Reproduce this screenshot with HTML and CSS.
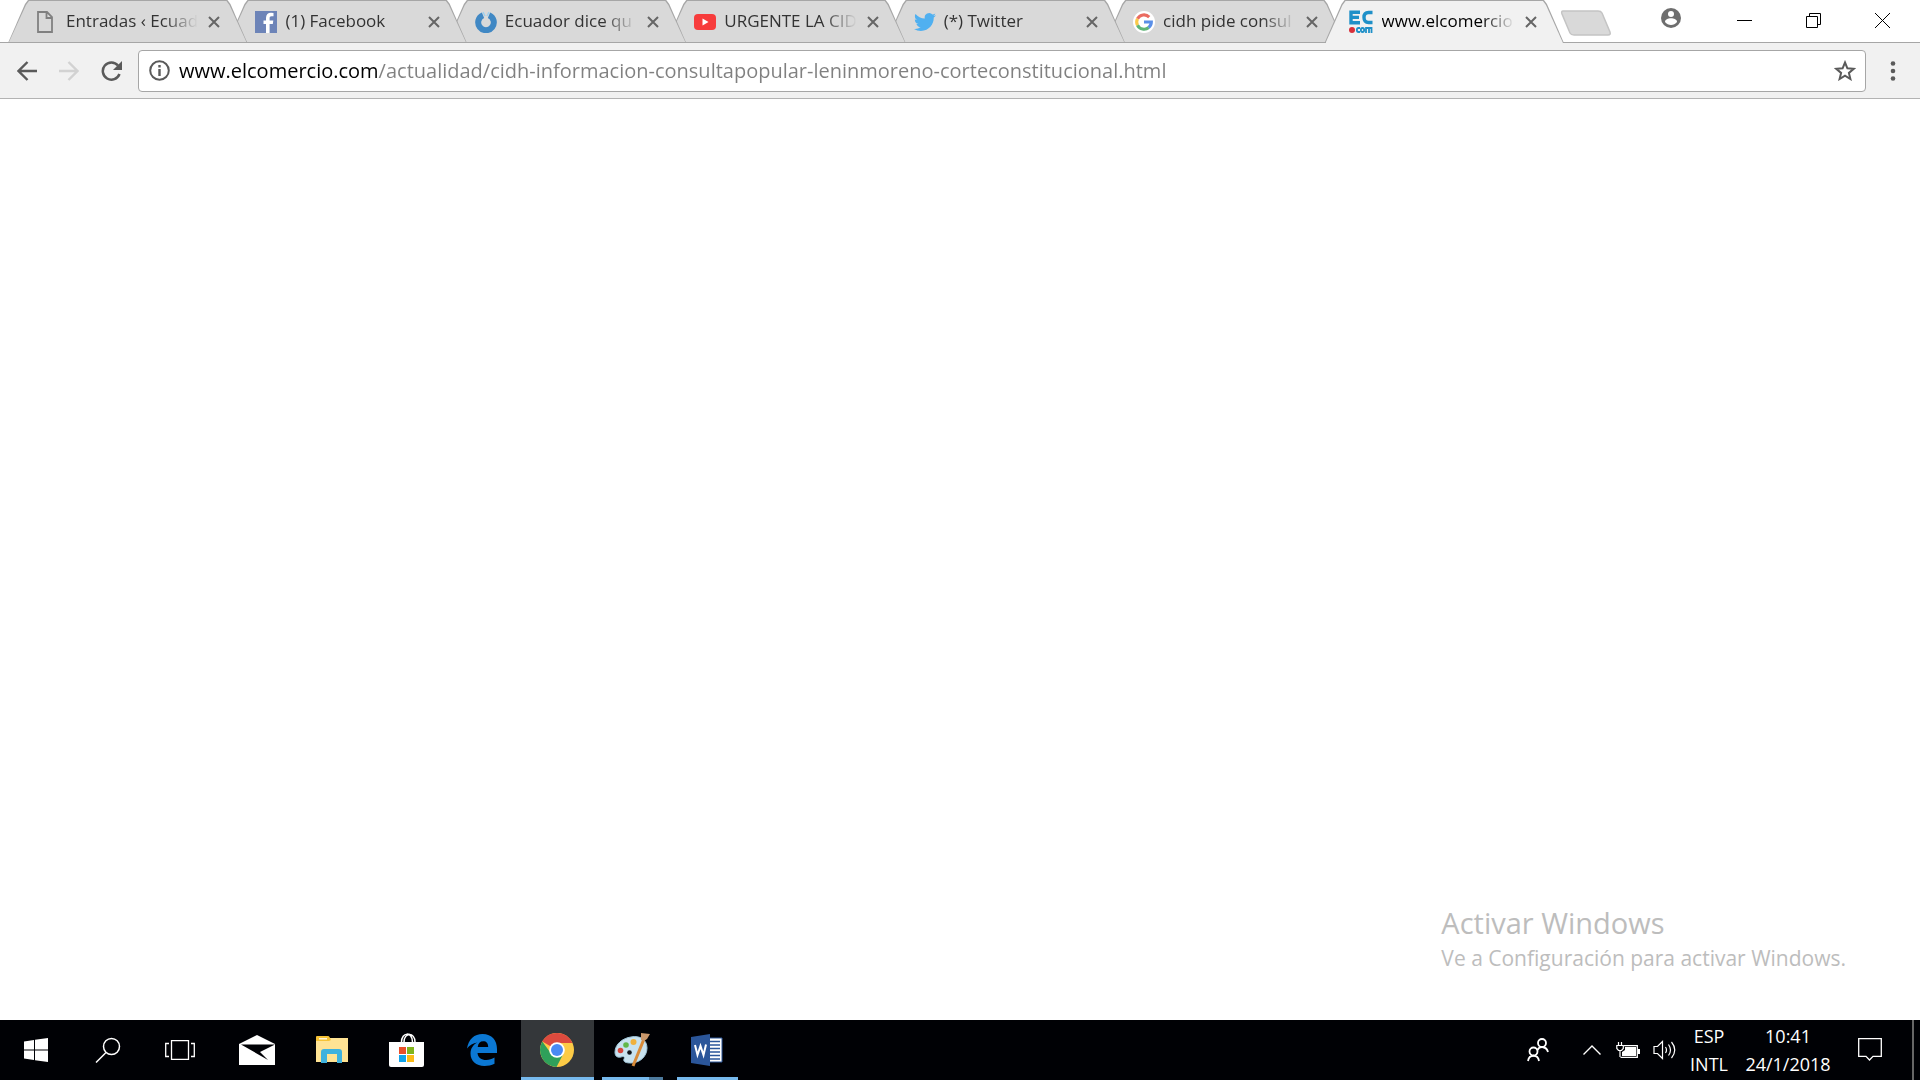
FILE: index.html
```
<!DOCTYPE html>
<html lang="es">
<head>
<meta charset="utf-8">
<title>www.elcomercio.com</title>
<link rel="stylesheet" href="styles.css">
</head>
<body>
<header class="titlebar">
  <ul class="tabs">
    <li class="tab">
      <svg class="favicon" viewBox="0 0 22 22"><path d="M2 1h9l5 5v15H2zM10.500 1v6H16" fill="none" stroke="#808080" stroke-width="1.800"/></svg>
      <a class="tab-title" href="#">Entradas ‹ Ecuad</a>
      <button class="tab-close" aria-label="Cerrar"><svg viewBox="0 0 12 12"><path d="M1 1l10 10M11 1L1 11"/></svg></button>
    </li>
    <li class="tab">
      <svg class="favicon" viewBox="0 0 22 22"><path fill="#6d84b8" d="M0 0h22v22H0z"/><path fill="#fff" d="M11 22v-9H8.500V9.500H11V7c0-3.500 2-5.200 5-5.200l2.500.1v3.300h-2c-1.500 0-1.900.8-1.900 1.900v2.400h3.700l-.5 3.500h-3.200v9z"/></svg>
      <a class="tab-title" href="#">(1) Facebook</a>
      <button class="tab-close" aria-label="Cerrar"><svg viewBox="0 0 12 12"><path d="M1 1l10 10M11 1L1 11"/></svg></button>
    </li>
    <li class="tab">
      <svg class="favicon" viewBox="0 0 22 22"><path d="M8 4.200A7.800 7.800 0 1 0 14 4.200" fill="none" stroke="#4088c4" stroke-width="6"/><path d="M8 1l2 4M14 1l-2 4" stroke="#9fd0ee" stroke-width="1.500"/></svg>
      <a class="tab-title" href="#">Ecuador dice qu</a>
      <button class="tab-close" aria-label="Cerrar"><svg viewBox="0 0 12 12"><path d="M1 1l10 10M11 1L1 11"/></svg></button>
    </li>
    <li class="tab">
      <svg class="favicon" viewBox="0 0 22 22"><rect y="3" width="22" height="16" rx="4" fill="#f73c3c"/><path fill="#fff" d="M8.500 7.500v7l6-3.500z"/></svg>
      <a class="tab-title" href="#">URGENTE LA CID</a>
      <button class="tab-close" aria-label="Cerrar"><svg viewBox="0 0 12 12"><path d="M1 1l10 10M11 1L1 11"/></svg></button>
    </li>
    <li class="tab">
      <svg class="favicon" viewBox="0 0 24 24"><path fill="#50b0f0" d="M23.950 4.570a10 10 0 0 1-2.820.77 4.960 4.960 0 0 0 2.160-2.720 9.900 9.900 0 0 1-3.120 1.190 4.920 4.920 0 0 0-8.380 4.480C7.690 8.100 4.070 6.130 1.640 3.160a4.820 4.820 0 0 0-.67 2.480c0 1.710.87 3.210 2.190 4.100a4.900 4.900 0 0 1-2.230-.62v.06a4.920 4.920 0 0 0 3.950 4.830 5 5 0 0 1-2.210.08 4.940 4.940 0 0 0 4.600 3.420A9.870 9.870 0 0 1 0 19.540a13.940 13.940 0 0 0 7.550 2.210c9.050 0 14-7.500 14-13.980 0-.21 0-.42-.02-.63a9.940 9.940 0 0 0 2.460-2.550z"/></svg>
      <a class="tab-title" href="#">(*) Twitter</a>
      <button class="tab-close" aria-label="Cerrar"><svg viewBox="0 0 12 12"><path d="M1 1l10 10M11 1L1 11"/></svg></button>
    </li>
    <li class="tab">
      <svg class="favicon" viewBox="0 0 24 24"><circle cx="12" cy="12" r="12" fill="#fff"/><g fill="none" stroke-width="3.400"><path stroke="#ea6b60" d="M17.700 6.600A8 8 0 0 0 4.900 8.500"/><path stroke="#fbc94a" d="M4.900 8.400a8 8 0 0 0 0 7.200"/><path stroke="#5fb577" d="M4.900 15.500a8 8 0 0 0 12.300 2.500"/><path stroke="#5a8fe8" d="M17.100 18.100A8 8 0 0 0 20 12h-8"/></g></svg>
      <a class="tab-title" href="#">cidh pide consul</a>
      <button class="tab-close" aria-label="Cerrar"><svg viewBox="0 0 12 12"><path d="M1 1l10 10M11 1L1 11"/></svg></button>
    </li>
    <li class="tab active">
      <svg class="favicon" viewBox="0 0 24 24"><path fill="none" stroke="#1f90c8" stroke-width="3.400" d="M11 2.200H2v10.600h9M2 7.400h8M23.500 2.500h-4c-3 0-4.500 2-4.500 5s1.500 5 4.500 5h4"/><circle cx="3" cy="20" r="3" fill="#d8303a"/><path fill="none" stroke="#1f90c8" stroke-width="1.800" d="M11 18H9.500C7.300 18 7.300 22 9.500 22H11M13.500 18c-2.200 0-2.200 4 0 4s2.200-4 0-4M17 23v-5h5.500v5M20 18v5"/></svg>
      <a class="tab-title" href="#">www.elcomercio</a>
      <button class="tab-close" aria-label="Cerrar"><svg viewBox="0 0 12 12"><path d="M1 1l10 10M11 1L1 11"/></svg></button>
    </li>
  </ul>
  <div class="window-area">
    <button class="new-tab" aria-label="Nueva pestaña"><svg width="52" height="26" viewBox="0 0 52 26"><path d="M3 1h35q3 0 4 2l8 19q1 3-2 3H14q-3 0-4-2L2 4q-1-3 1-3z" fill="#d9d9d9" stroke="#c4c4c4" stroke-width="1.500"/></svg></button>
    <div class="window-controls">
      <button class="profile" aria-label="Usuario"><svg width="20" height="20" viewBox="0 0 20 20"><circle cx="10" cy="10" r="10" fill="#6e6e6e"/><circle cx="10" cy="6" r="3" fill="#fff"/><path fill="#fff" d="M4 14c0-5 12-5 12 0-3 4-9 4-12 0z"/></svg></button>
      <button aria-label="Minimizar"><svg width="15" height="15" viewBox="0 0 15 15"><path d="M0 7.500h15"/></svg></button>
      <button aria-label="Restaurar"><svg width="15" height="15" viewBox="0 0 15 15"><path d="M.5 3.500h11v11H.5zM3.500 3.500v-3h11v11h-3"/></svg></button>
      <button aria-label="Cerrar ventana"><svg width="15" height="15" viewBox="0 0 15 15"><path d="M0 0l15 15M15 0L0 15"/></svg></button>
    </div>
  </div>
</header>
<nav class="toolbar">
  <button class="tool" aria-label="Atrás"><svg width="20" height="20" viewBox="0 0 20 20"><path d="M20 10H2M10.500 1L1.500 10l9 9" fill="none" stroke="#5a5a5a" stroke-width="2.400"/></svg></button>
  <button class="tool" aria-label="Adelante" disabled><svg width="20" height="20" viewBox="0 0 20 20"><path d="M0 10h18M9.500 1l9 9-9 9" fill="none" stroke="#d2d2d2" stroke-width="2.400"/></svg></button>
  <button class="tool" aria-label="Recargar"><svg width="21" height="20" viewBox="0 0 21 20"><path d="M17 4.500A8.600 8.600 0 1 0 18.500 13" fill="none" stroke="#5a5a5a" stroke-width="2.500"/><path fill="#5a5a5a" d="M21 0v9h-9z"/></svg></button>
  <div class="omnibox">
    <svg width="21" height="21" viewBox="0 0 21 21"><circle cx="10.500" cy="10.500" r="9.300" fill="none" stroke="#5a5a5a" stroke-width="2"/><path d="M10.500 9v7M10.500 5v2.500" stroke="#5a5a5a" stroke-width="2.400"/></svg>
    <input class="url" type="text" aria-label="Dirección" spellcheck="false" value="www.elcomercio.com/actualidad/cidh-informacion-consultapopular-leninmoreno-corteconstitucional.html">
    <button class="star" aria-label="Añadir a marcadores"><svg width="22" height="21" viewBox="0 0 22 21"><path d="M11 2.500l2.400 5.800 6.300.5-4.800 4.100 1.500 6.100L11 15.700 5.600 19l1.500-6.100-4.800-4.100 6.300-.5z" fill="none" stroke="#5a5a5a" stroke-width="2"/></svg></button>
  </div>
  <button class="menu" aria-label="Menú"><svg width="6" height="20" viewBox="0 0 6 20" fill="#5a5a5a"><circle cx="3" cy="2.500" r="2.300"/><circle cx="3" cy="10" r="2.300"/><circle cx="3" cy="17.500" r="2.300"/></svg></button>
</nav>
<main class="page">
  <aside class="watermark">
    <p class="watermark-title">Activar Windows</p>
    <p class="watermark-text">Ve a Configuración para activar Windows.</p>
  </aside>
</main>
<footer class="taskbar">
  <div class="system">
    <button aria-label="Inicio"><svg width="24" height="24" viewBox="0 0 24 24" fill="#fff"><path d="M0 3.400l10-1.400v9.500H0zM11 1.800L24 0v11.500H11zM0 12.500h10V22L0 20.600zM11 12.500h13V24l-13-1.800z"/></svg></button>
    <button aria-label="Buscar"><svg width="26" height="26" viewBox="0 0 26 26" fill="none" stroke="#fff" stroke-width="1.500"><circle cx="16.500" cy="9.500" r="8"/><path d="M11 15.500L1 25.500"/></svg></button>
    <button aria-label="Vista de tareas"><svg width="30" height="20" viewBox="0 0 30 20" fill="none" stroke="#fff"><path stroke-width="1.300" d="M6.500.7h17v18.600h-17zM4 3.500H.7v13H4M26 3.500h3.300v13H26"/></svg></button>
  </div>
  <div class="apps">
    <button aria-label="Correo"><svg width="36" height="30" viewBox="0 0 36 30"><path fill="#fff" d="M0 9L18 0l18 9v21H0z"/><path fill="#000105" d="M2 9.500h34L21 17l8 8z"/></svg></button>
    <button aria-label="Explorador de archivos"><svg width="32" height="28" viewBox="0 0 32 28"><path fill="#ffe394" d="M0 2h32v24H0z"/><path fill="#f6c336" d="M0 1q0-1 1-1h11q1 0 1.500 1L15 4l-2 1H0z"/><path fill="#fff6d8" d="M3 2h8v1.500H3z"/><path fill="#3fb2de" d="M5 27V16q0-3 3-3h15q3 0 3 3v11h-5v-9H11v9z"/></svg></button>
    <button aria-label="Tienda"><svg width="36" height="34" viewBox="0 0 36 34"><path d="M12.500 9c0-10 11-11 11 0M15 9c0-10 11-10 11 0" fill="none" stroke="#fff" stroke-width="1.500"/><path fill="#fff" d="M0 9h35v23q0 2-2 2H2q-2 0-2-2z"/><path fill="#e9502b" d="M10 14h7v7h-7z"/><path fill="#80b41c" d="M18 14h7v7h-7z"/><path fill="#12a4ea" d="M10 22h7v7h-7z"/><path fill="#fbba16" d="M18 22h7v7h-7z"/></svg></button>
    <button aria-label="Edge"><svg width="30" height="32" viewBox="0 0 30 32"><path fill="#0b78d4" d="M0 14.500C1.500 5 7.500 0 15.500 0 25 0 30 6.500 30 15v4H10.500c.3 4.500 4 7 8.700 7 3 0 5.800-.9 8.300-2.500v6.300C24.500 31.300 21 32 17.500 32 9 32 3.500 27 3.500 19.500c0-5 2.800-9 7-11-4.500.5-8 2.500-10.500 6zM10.700 13h10.500c0-3.700-1.800-5.700-5-5.700-3.100 0-5 2-5.500 5.700z"/></svg></button>
    <button class="running current" aria-label="Chrome"><svg width="34" height="34" viewBox="0 0 34 34"><circle cx="17" cy="17" r="17" fill="#fccb46"/><path fill="#dc4a3e" d="M17 17L2.300 8.500A17 17 0 0 1 32.500 10H17z"/><path fill="#2fa05a" d="M2.300 8.500A17 17 0 0 0 16.500 34l7-13.500L17 17l-6 3.500z"/><circle cx="17" cy="17" r="7.800" fill="#fff"/><circle cx="17" cy="17" r="6" fill="#4a8af4"/></svg></button>
    <button class="running grouped" aria-label="Paint"><svg width="36" height="36" viewBox="0 0 36 36"><path fill="#c8e2ef" stroke="#9fc5d9" d="M17 5C26 3 33 8 33 16c0 9-8 15-16 15-5 0-8-1-7-4 1-2 0-3-3-2-5 1-6-2-6-5C1 12 9 6 17 5z"/><circle cx="15.500" cy="20.500" r="2.300" fill="#10151c"/><circle cx="6.500" cy="18.500" r="2.800" fill="#d8473c"/><circle cx="12" cy="13" r="2.800" fill="#61b84a"/><circle cx="19.500" cy="10" r="3" fill="#f0b13c"/><path d="M30 7L19 34" stroke="#d88b3a" stroke-width="3"/><path fill="#c9976b" d="M27 1l9 1-3 5-3 2-3-1z"/></svg></button>
    <button class="running" aria-label="Word"><svg width="32" height="32" viewBox="0 0 32 32"><path fill="#fff" stroke="#2b569a" d="M16 4h15v24H16z"/><path d="M19 7.500h10M19 11h10M19 14.500h10M19 18h10M19 21.500h10M19 25h10" stroke="#2b569a" stroke-width="1.500"/><path fill="#2b569a" d="M0 3l19-3v32L0 29z"/><path d="M4 11l2.500 10L9.500 12l3 9L15 10.500" fill="none" stroke="#fff" stroke-width="2"/></svg></button>
  </div>
  <div class="tray">
    <button class="people" aria-label="Contactos"><svg width="22" height="24" viewBox="0 0 22 24" fill="none" stroke="#fff" stroke-width="1.800"><circle cx="15" cy="5" r="4"/><path d="M10.500 12c2-4 9-4 10.500 2"/><circle cx="6.500" cy="13.500" r="4"/><path d="M1 23c1-7 10-7 11 0"/></svg></button>
    <button aria-label="Mostrar iconos ocultos"><svg width="18" height="10" viewBox="0 0 18 10"><path d="M.5 9.500L9 1l8.500 8.500" fill="none" stroke="#fff" stroke-width="1.400"/></svg></button>
    <button aria-label="Batería"><svg width="24" height="16" viewBox="0 0 24 16"><path d="M8 3.700h13.300v11.600H4.500" fill="none" stroke="#fff" stroke-width="1.300"/><path fill="#fff" d="M9 5h11v9H6v-4l3-2zM22 7h2v5h-2z"/><path d="M2.500 0v3M5.500 0v3M.8 3.500h6.500v3L5.500 8.500h-3L.8 6.500zM4 8.500V15" fill="none" stroke="#fff" stroke-width="1.200"/></svg></button>
    <button aria-label="Volumen"><svg width="23" height="20" viewBox="0 0 23 20" fill="none" stroke="#fff" stroke-width="1.200"><path d="M1 6.500h3.500L9.500 1.500v17l-5-5H1zM12.500 7q2 3 0 6M15.500 4.500q4 5.500 0 11M18.500 2q6.500 8 0 16"/></svg></button>
    <button class="language">ESP<br>INTL</button>
    <button class="clock">10:41<br>24/1/2018</button>
    <button class="notifications" aria-label="Notificaciones"><svg width="24" height="24" viewBox="0 0 24 24"><path d="M.7.700h22.600v17.600H15L11.500 22 8 18.300H.7z" fill="none" stroke="#fff" stroke-width="1.300"/></svg></button>
    <button class="show-desktop" aria-label="Mostrar escritorio"></button>
  </div>
</footer>
</body>
</html>
```
FILE: styles.css
```
* { box-sizing: border-box; }

body {
  display: flex;
  flex-direction: column;
  min-height: 100vh;
  margin: 0;
  background: #fff;
  color: #333;
  font-family: "Open Sans", "Noto Sans", sans-serif;
  font-size: 18px;
}

button {
  display: flex;
  align-items: center;
  justify-content: center;
  flex: none;
  padding: 0;
  border: 0;
  background: none;
  color: inherit;
  font: inherit;
}

svg { display: block; flex: none; }

/* Tab strip */
.titlebar {
  display: flex;
  height: 43px;
  padding-left: 8px;
  box-shadow: inset 0 -1px #a6a6a6;
}

.tabs {
  display: flex;
  flex: 1;
  min-width: 0;
  margin: 0;
  padding: 0;
  list-style: none;
}

.tab {
  position: relative;
  isolation: isolate;
  display: flex;
  align-items: center;
  flex: 1 1 100px;
  min-width: 0;
  height: 43px;
  margin-right: -20px;
  padding: 0 27px 0 28px;
}

.tab:nth-child(1) { z-index: 6; }
.tab:nth-child(2) { z-index: 5; }
.tab:nth-child(3) { z-index: 4; }
.tab:nth-child(4) { z-index: 3; }
.tab:nth-child(5) { z-index: 2; }
.tab:nth-child(6) { z-index: 1; }
.tab.active { z-index: 7; margin-right: 0; padding-left: 24px; }

.tab::before,
.tab::after {
  content: "";
  position: absolute;
  z-index: -1;
  inset: 0;
  background: #a6a6a6;
  clip-path: polygon(0 100%, 17px 4px, 20px 0, calc(100% - 20px) 0, calc(100% - 17px) 4px, 100% 100%);
}

.tab::after {
  inset: 1px;
  background: #d9d9d9;
}

.tab.active::after {
  bottom: 0;
  background: #f1f1f1;
}

.favicon {
  width: 22px;
  height: 22px;
  margin-right: 8px;
}

.active .favicon { width: 24px; height: 24px; margin-right: 9px; }

.tab-title {
  flex: 1;
  margin-bottom: 1px;
  overflow: hidden;
  color: #333;
  font-size: 17px;
  line-height: 40px;
  text-decoration: none;
  white-space: nowrap;
  mask-image: linear-gradient(90deg, #000 calc(100% - 34px), transparent);
}

.tab.active .tab-title { color: #000; }

.tab-close { width: 12px; margin: 1px 0 0 10px; }
.tab-close svg { width: 12px; height: 12px; }
.tab-close path { stroke: #666; stroke-width: 2; }

.window-area {
  display: flex;
  justify-content: space-between;
  flex: none;
  width: 356px;
  padding-right: 3px;
}

.new-tab { align-self: flex-start; margin: 10px 0 0 -4px; }

.window-controls { display: flex; height: 40px; }
.window-controls button { width: 69px; }
.window-controls .profile { width: 78px; padding-bottom: 4px; }
.window-controls button:not(.profile) path { fill: none; stroke: #000; }

/* Toolbar */
.toolbar {
  display: flex;
  align-items: center;
  height: 56px;
  padding-left: 6px;
  border-bottom: 1px solid #b3b3b3;
  background: #f1f1f1;
}

.tool { width: 42px; height: 42px; }

.omnibox {
  display: flex;
  align-items: center;
  flex: 1;
  height: 42px;
  margin-left: 6px;
  padding: 0 9px 0 10px;
  border: 1px solid #a6a6a6;
  border-radius: 4px;
  background: #fff;
}

.url {
  flex: 1;
  min-width: 0;
  height: 38px;
  margin: 0 9px;
  padding: 0;
  border: 0;
  outline: 0;
  color: #808080;
  font: inherit;
  font-size: 20px;
  /* The host name is darker than the path after it. */
  background: linear-gradient(90deg, #000 199px, #808080 199px);
  background-clip: text;
  -webkit-text-fill-color: transparent;
}

.menu { width: 54px; height: 42px; }

/* Page */
.page {
  display: flex;
  align-items: flex-end;
  justify-content: flex-end;
  flex: 1;
  padding: 0 74px 46px;
}

.watermark { color: #bdbdbd; }
.watermark p { margin: 0; }
.watermark-title { font-size: 29px; line-height: 38px; }
.watermark-text { font-size: 21px; line-height: 32px; }

/* Taskbar */
.taskbar {
  display: flex;
  height: 60px;
  background: #000105;
  color: #fff;
}

.system,
.apps,
.tray { display: flex; }

.system button { width: 72px; }

.apps { margin-left: 4px; }

.apps button {
  position: relative;
  width: 73px;
  margin: 0 1px;
  padding-right: 2px;
}

.apps .current { background: #34373a; }

.running::after {
  content: "";
  position: absolute;
  inset: auto 6px 0;
  height: 3px;
  background: #76b9ed;
}

.current::after { inset: auto 0 0; }
.grouped::after { background: linear-gradient(90deg, #76b9ed 47px, #4d7a9e 47px); }

.tray { margin-left: auto; }
.tray button { width: 36px; }
.tray .people { width: 72px; }
.tray .language { width: 54px; line-height: 28px; }
.tray .clock { width: 104px; line-height: 28px; }
.tray .notifications { width: 60px; }
.tray .show-desktop { width: 8px; margin-left: 12px; border-left: 2px solid #666; }
```
